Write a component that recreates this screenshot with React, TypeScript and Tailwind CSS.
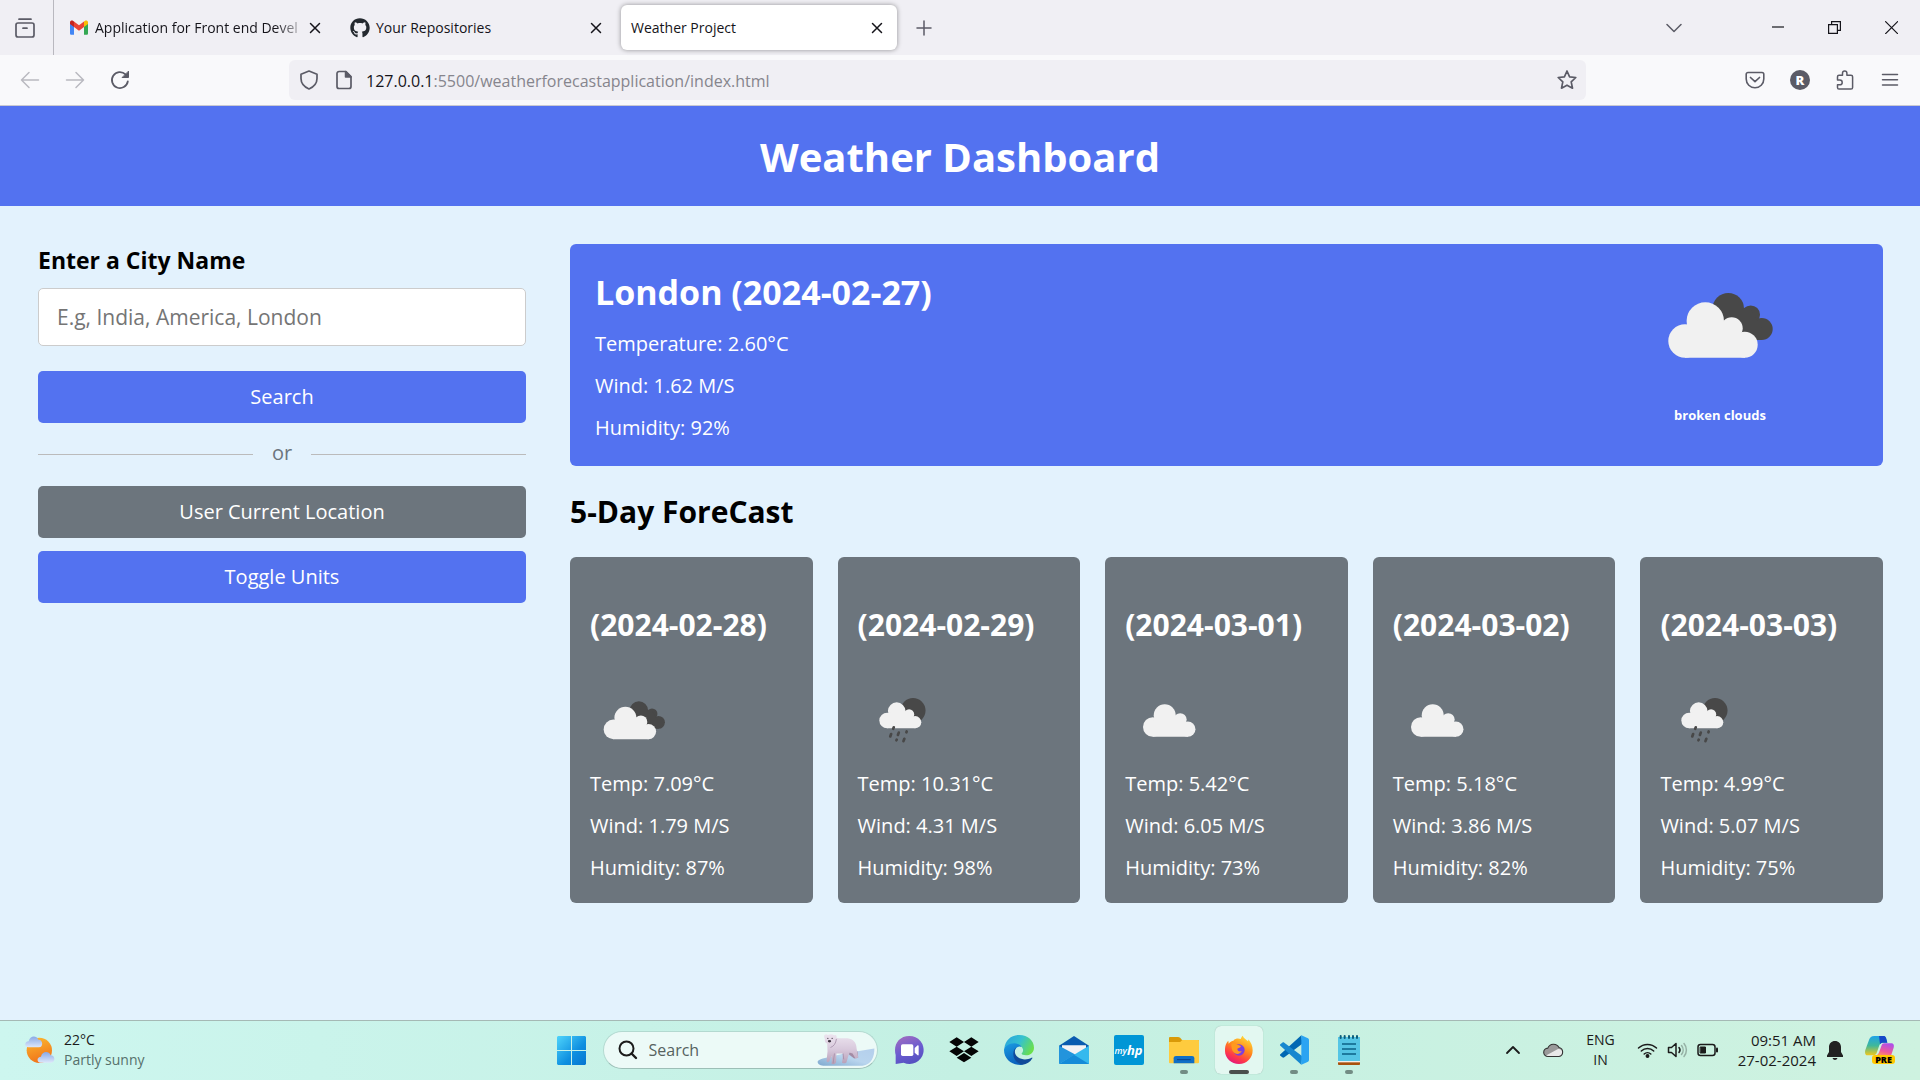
import type { ReactNode } from "react";
import { FaGithub } from "react-icons/fa";

type IconProps = { children: ReactNode; className?: string; box?: string };

/* Thin outlined icon used by the browser chrome */
function Line({ children, className = "size-5", box = "0 0 20 20" }: IconProps) {
  return (
    <svg viewBox={box} className={className} fill="none" stroke="currentColor" strokeWidth="1.5" strokeLinecap="round" strokeLinejoin="round" aria-hidden="true">
      {children}
    </svg>
  );
}

/* Filled, multi-colour icon */
function Art({ children, className = "size-[30px]", box = "0 0 90 90" }: IconProps) {
  return (
    <svg viewBox={box} className={className} aria-hidden="true">
      {children}
    </svg>
  );
}

function CloseMark() {
  return (
    <Line className="size-3" box="0 0 12 12">
      <path d="M1.5 1.5l9 9M10.5 1.5l-9 9" />
    </Line>
  );
}

type TabProps = { title: string; icon?: ReactNode; active?: boolean; fade?: boolean };

function Tab({ title, icon, active, fade }: TabProps) {
  return (
    <div
      className={
        active
          ? "flex h-[45px] w-[276px] items-center rounded-md bg-white pr-3.5 pl-2.5 shadow-[0_0_5px_rgba(0,0,0,0.4)]"
          : "flex h-[45px] w-[276px] items-center pr-3.5 pl-2.5"
      }
    >
      {icon && <span className="mr-1.5 shrink-0">{icon}</span>}
      <span
        className={
          fade
            ? "flex-1 [mask-image:linear-gradient(to_right,black_84%,transparent)] text-[14px] leading-5 whitespace-nowrap"
            : "flex-1 text-[14px] leading-5 whitespace-nowrap"
        }
      >
        {title}
      </span>
      <button type="button" aria-label={`Close ${title}`} className="shrink-0">
        <CloseMark />
      </button>
    </div>
  );
}

function TabBar() {
  return (
    <div className="flex h-[55px] items-center bg-[#f0eff4] text-[#15141a]">
      <button type="button" aria-label="Firefox View" className="flex h-full w-[54px] items-center justify-center border-r border-[#b9b8bf] text-[#5b5b66]">
        <Line className="-ml-1 size-5">
          <rect x="1" y="5" width="18" height="14" rx="2" strokeWidth="1.7" />
          <path d="M4 1.2h12M8 10.2h4" strokeWidth="1.7" />
        </Line>
      </button>
      <div className="ml-[5px] flex gap-[5px]">
        <Tab
          title="Application for Front end Devel"
          fade
          icon={
            <Art className="h-[15px] w-5" box="0 0 20 15">
              <path d="M1 2v11.5c0 .8.6 1.3 1.3 1.3H5V6z" fill="#4285f4" />
              <path d="M19 2v11.5c0 .8-.6 1.3-1.3 1.3H15V6z" fill="#34a853" />
              <path d="M15 1.6V7l4-3V2.4C19 .6 17 0 15.800.9z" fill="#fbbc04" />
              <path d="M5 7V1.500l5 3.8 5-3.800V7l-5 3.800z" fill="#ea4335" />
              <path d="M1 2.400V4l4 3V1.500L4.200.9C3 0 1 .6 1 2.400z" fill="#c5221f" />
            </Art>
          }
        />
        <Tab title="Your Repositories" icon={<FaGithub className="size-5 text-[#24292f]" aria-hidden="true" />} />
        <Tab title="Weather Project" active />
      </div>
      <button type="button" aria-label="New tab" className="ml-[19px] text-[#5b5b66]">
        <Line className="size-4" box="0 0 16 16">
          <path d="M8 1v14M1 8h14" />
        </Line>
      </button>
      <div className="ml-auto flex items-center pr-[22px]">
        <button type="button" aria-label="List all tabs" className="mr-[90px] text-[#5b5b66]">
          <Line className="size-4" box="0 0 16 16">
            <path d="M1 4.500l7 7 7-7" />
          </Line>
        </button>
        <div className="flex items-center gap-11">
          <button type="button" aria-label="Minimize">
            <Line className="h-[13px] w-3" box="0 0 12 13">
              <path d="M0 6h12" strokeWidth="1.200" strokeLinecap="butt" />
            </Line>
          </button>
          <button type="button" aria-label="Restore">
            <Line className="size-[13px]" box="0 0 13 13">
              <path d="M.600 3.600h8.800v8.800H.600zM3.600 3.600V.600h8.800v8.800h-3" strokeWidth="1.200" strokeLinejoin="miter" />
            </Line>
          </button>
          <button type="button" aria-label="Close window">
            <Line className="size-[13px]" box="0 0 13 13">
              <path d="M.600.600l12 12M12.600.600l-12 12" strokeWidth="1.200" />
            </Line>
          </button>
        </div>
      </div>
    </div>
  );
}

function AddressBar() {
  return (
    <div className="flex h-[51px] items-center border-b border-[#c9c9d2] bg-[#f9f9fb] pr-5 pl-5 text-[#5b5b66]">
      <div className="flex w-[269px] shrink-0 items-center gap-[25px]">
        <button type="button" aria-label="Back" className="text-[#b9b9c0]">
          <Line>
            <path d="M18.500 10H1.500M9 2.500L1.500 10 9 17.500" />
          </Line>
        </button>
        <button type="button" aria-label="Forward" className="text-[#b9b9c0]">
          <Line>
            <path d="M1.500 10h17M11 2.500l7.500 7.500-7.500 7.500" />
          </Line>
        </button>
        <button type="button" aria-label="Reload">
          <Line>
            <path d="M17.800 11.500A8 8 0 1 1 15.500 4.300" strokeWidth="1.800" />
            <path d="M18.500 1.500v6h-6z" fill="currentColor" strokeWidth="1" />
          </Line>
        </button>
      </div>
      <div className="flex h-10 flex-1 items-center rounded-md bg-[#f0eff4] pr-[9px] pl-[10px]">
        <Line>
          <path d="M10 1L18 4.200v4.300c0 5-3.500 8.500-8 10.500-4.500-2-8-5.500-8-10.500V4.200z" strokeWidth="1.700" />
        </Line>
        <Line className="ml-[15px] size-5">
          <path d="M12 1.500H5a2 2 0 0 0-2 2v13a2 2 0 0 0 2 2h10a2 2 0 0 0 2-2V6.500z" strokeWidth="1.700" />
          <path d="M11.500 1.500v5.500H17z" fill="currentColor" />
        </Line>
        <p className="ml-3 flex-1 pt-0.5 text-base leading-6 text-[#86858d]">
          <span className="text-[#15141a]">127.0.0.1</span>:5500/weatherforecastapplication/index.html
        </p>
        <button type="button" aria-label="Bookmark this page">
          <Line>
            <path d="M10 1l2.600 5.800 6.200.700-4.600 4.300 1.300 6.400L10 15.200l-5.500 3 1.300-6.400L1.200 7.500l6.200-.700z" strokeWidth="1.700" />
          </Line>
        </button>
      </div>
      <div className="flex w-[314px] shrink-0 items-center justify-end gap-[25px]">
        <button type="button" aria-label="Save to Pocket">
          <Line>
            <path d="M3 2.500h14a1.800 1.800 0 0 1 1.800 1.800V9a8.800 8.800 0 0 1-17.600 0V4.300A1.800 1.800 0 0 1 3 2.500z" strokeWidth="1.600" />
            <path d="M5.500 7.500l4.500 4.200 4.500-4.200" strokeWidth="1.700" />
          </Line>
        </button>
        <button type="button" aria-label="Account" className="flex size-5 items-center justify-center rounded-full bg-[#5b5b66] text-[13px] leading-none font-extrabold text-white">
          R
        </button>
        <button type="button" aria-label="Extensions">
          <Line>
            <path d="M2.500 10V6.800C2.500 5.800 3 5.200 4 5.200h3.500V3.300a2.200 2.200 0 0 1 4.400 0v1.900H16c1 0 1.600.600 1.600 1.600v10.600c0 1-.600 1.600-1.600 1.600H4c-1 0-1.500-.600-1.500-1.600v-2.600H4.800a2.400 2.400 0 0 0 0-4.800z" strokeWidth="1.500" />
          </Line>
        </button>
        <button type="button" aria-label="Menu">
          <Line>
            <path d="M2.500 4.500h15M2.500 9.800h15M2.500 15h15" />
          </Line>
        </button>
      </div>
    </div>
  );
}

/* ---------- Weather drawings, on a 150 unit canvas ---------- */

function WhiteCloud({ transform }: { transform?: string }) {
  return (
    <g fill="#f1f1f1" transform={transform}>
      <circle cx="40" cy="91" r="16.700" />
      <circle cx="60.300" cy="71" r="18.700" />
      <circle cx="86.700" cy="78.300" r="11" />
      <circle cx="99.700" cy="94.700" r="13" />
      <path d="M40 80L50 72h38l8 12 4 8v15.700H40z" />
    </g>
  );
}

type Sky = "broken" | "rain" | "cloud";

function WeatherIcon({ sky, large }: { sky: Sky; large?: boolean }) {
  return (
    <svg viewBox={large ? "0 19 150 112" : "0 0 150 150"} className={large ? "h-28 w-[150px]" : "size-[88px]"} role="img" aria-label={sky}>
      {sky === "broken" && (
        <g fill="#484848">
          <circle cx="83.300" cy="58.700" r="15.700" />
          <circle cx="105.700" cy="64.700" r="9.300" />
          <circle cx="116.700" cy="79" r="11" />
          <path d="M84 60h22l11 18v12H88z" />
        </g>
      )}
      {sky === "rain" && <circle cx="93.800" cy="59" r="21.300" fill="#484848" />}
      {sky === "broken" && <WhiteCloud />}
      {sky === "cloud" && <WhiteCloud transform="translate(7.400 -4)" />}
      {sky === "rain" && (
        <>
          <WhiteCloud transform="translate(17.700 3) scale(0.800)" />
          <g stroke="#484848" strokeWidth="4.600" strokeLinecap="round">
            <path d="M61 87.500l-1 2.500M56.500 99l-1.500 4M69.500 96.500l-1.500 4M83 94.500l-.500 1.500M66 108.500l-.500 1M79 107l-1.500 4" />
          </g>
        </>
      )}
    </svg>
  );
}

const forecast: { date: string; sky: Sky; temp: string; wind: string; humidity: string }[] = [
  { date: "2024-02-28", sky: "broken", temp: "7.09", wind: "1.79", humidity: "87" },
  { date: "2024-02-29", sky: "rain", temp: "10.31", wind: "4.31", humidity: "98" },
  { date: "2024-03-01", sky: "cloud", temp: "5.42", wind: "6.05", humidity: "73" },
  { date: "2024-03-02", sky: "cloud", temp: "5.18", wind: "3.86", humidity: "82" },
  { date: "2024-03-03", sky: "rain", temp: "4.99", wind: "5.07", humidity: "75" },
];

function SearchPanel() {
  return (
    <section className="flex flex-col">
      <label htmlFor="city" className="text-[23px] leading-8 font-bold text-black">
        Enter a City Name
      </label>
      <input
        id="city"
        type="text"
        placeholder="E.g, India, America, London"
        className="mt-3 h-[58px] w-full rounded-[5px] border border-[#ccc] bg-white px-[18px] text-[21px] placeholder:text-[#757575]"
      />
      <button type="button" className="mt-[25px] h-[52px] rounded-[5px] bg-[#5372f0] text-xl text-white">
        Search
      </button>
      <div className="my-[18px] flex h-[27px] items-center gap-[19px] text-xl text-[#6c757d]">
        <span className="h-px flex-1 bg-[#bbb]" />
        <span className="pb-1">or</span>
        <span className="h-px flex-1 bg-[#bbb]" />
      </div>
      <button type="button" className="h-[52px] rounded-[5px] bg-[#6c757d] text-xl text-white">
        User Current Location
      </button>
      <button type="button" className="mt-[13px] h-[52px] rounded-[5px] bg-[#5372f0] text-xl text-white">
        Toggle Units
      </button>
    </section>
  );
}

function Reading({ children }: { children: ReactNode }) {
  return <p className="text-xl leading-[27px] font-medium">{children}</p>;
}

function WeatherPage() {
  return (
    <div className="flex-1 bg-[#e3f2fd]">
      <h1 className="bg-[#5372f0] pt-6 pb-[22px] text-center text-[40px] leading-[54px] font-bold text-white">Weather Dashboard</h1>
      <main className="grid grid-cols-[488fr_1313fr] gap-11 py-[38px] pr-[37px] pl-[38px]">
        <SearchPanel />
        <section>
          <div className="flex justify-between rounded-md bg-[#5372f0] py-[25px] pr-[88px] pl-[25px] text-white">
            <div className="flex flex-col gap-[15px]">
              <h2 className="text-[34px] leading-[46px] font-bold">London (2024-02-27)</h2>
              <Reading>Temperature: 2.60°C</Reading>
              <Reading>Wind: 1.62 M/S</Reading>
              <Reading>Humidity: 92%</Reading>
            </div>
            <div className="text-center">
              <WeatherIcon sky="broken" large />
              <p className="mt-[25px] text-[13px] leading-[18px] font-bold">broken clouds</p>
            </div>
          </div>
          <h2 className="my-[25px] text-[30px] leading-[41px] font-bold text-black">5-Day ForeCast</h2>
          <ul className="grid grid-cols-5 gap-[25px]">
            {forecast.map((day) => (
              <li key={day.date} className="rounded-md bg-[#6c757d] px-5 pt-[47px] pb-[22px] text-white">
                <h3 className="text-[30px] leading-[41px] font-bold whitespace-nowrap">({day.date})</h3>
                <div className="mt-[31px] mb-1.5">
                  <WeatherIcon sky={day.sky} />
                </div>
                <div className="flex flex-col gap-[15px]">
                  <Reading>Temp: {day.temp}°C</Reading>
                  <Reading>Wind: {day.wind} M/S</Reading>
                  <Reading>Humidity: {day.humidity}%</Reading>
                </div>
              </li>
            ))}
          </ul>
        </section>
      </main>
    </div>
  );
}

/* ---------- Taskbar ---------- */

function PolarBear() {
  return (
    <Art className="h-8 w-[58px]" box="830 75 174 97">
      <defs>
        <linearGradient id="ice" x1="0" x2="1" y1="1" y2="0">
          <stop offset="0" stopColor="#7fa9cf" />
          <stop offset=".5" stopColor="#b9d5ee" />
          <stop offset="1" stopColor="#b4cfec" />
        </linearGradient>
        <linearGradient id="fur" x1="0" x2="0" y1="0" y2="1">
          <stop offset="0" stopColor="#ece4ef" />
          <stop offset=".5" stopColor="#d8c9dc" />
          <stop offset="1" stopColor="#b79fb6" />
        </linearGradient>
      </defs>
      <path d="M831 158c2-8 40-14 80-24l92-15c0 24-8 50-36 52H848c-12-2-18-6-17-13z" fill="url(#ice)" />
      <path d="M930 118l22 10 2 18-12 3-16-12z" fill="#a38ba4" />
      <path d="M852 78c4-4 8-1 10 0 7-3 14-3 19 1 6-3 9 1 7 7 12 4 22 1 34 2 17 2 27 14 27 30l5 28-8 4-9-16-10-3-8 28c-1 5-9 6-14 3l1-8 2-20-20 0-1 26c-1 6-9 8-14 5l1-8-1-16-6 16c-3 5-9 4-9-1l3-28-1-24c-6-2-8-8-7-14-2-4-4-9-1-12z" fill="url(#fur)" />
      <path d="M888 90c-2 14-8 22-18 26M882 134l-4 30M908 134l2 18" stroke="#a48da8" strokeWidth="2.500" fill="none" />
      <circle cx="862" cy="88" r="2" fill="#443746" />
      <circle cx="875" cy="88" r="2" fill="#443746" />
      <ellipse cx="867" cy="97" rx="5" ry="3.500" fill="#3d3340" />
    </Art>
  );
}

const apps: { name: string; mark?: "running" | "active"; art: ReactNode }[] = [
  {
    name: "Chat",
    art: (
      <Art>
        <defs>
          <linearGradient id="chat" x1=".2" x2=".6" y1="0" y2="1">
            <stop offset="0" stopColor="#a06cc0" />
            <stop offset=".55" stopColor="#6a5bd0" />
            <stop offset="1" stopColor="#5550c0" />
          </linearGradient>
        </defs>
        <path d="M46 3a42 42 0 1 1-17 80L5 87V60C-3 30 14 3 46 3z" fill="url(#chat)" />
        <rect x="21" y="28" width="37" height="35" rx="5" fill="#fff" />
        <path d="M62 39l9-8c1-1 3 0 3 2v26c0 2-2 3-3 2l-9-8z" fill="#fff" />
      </Art>
    ),
  },
  {
    name: "Dropbox",
    art: (
      <Art>
        <path d="M23 7L1 21l22 14 22-14zM67 7L45 21l22 14 22-14zM23 35L1 49l22 14 22-14zM67 35L45 49l22 14 22-14zM45 54L23 68l22 14 22-14z" fill="#050505" />
      </Art>
    ),
  },
  {
    name: "Edge",
    art: (
      <Art>
        <defs>
          <linearGradient id="edgeTop" x1="0" x2="1" y1=".2" y2=".6">
            <stop offset="0" stopColor="#2aa5dc" />
            <stop offset=".5" stopColor="#35c1d0" />
            <stop offset="1" stopColor="#6be04a" />
          </linearGradient>
          <linearGradient id="edgeLeft" x1="0" x2=".4" y1="0" y2="1">
            <stop offset="0" stopColor="#1b9de2" />
            <stop offset="1" stopColor="#0b62bd" />
          </linearGradient>
        </defs>
        <path d="M1 40C4 15 22 0 46 0c26 0 44 18 44 38 0 15-12 23-24 23-9 0-14-3-13-6 3-4 5-7 4-12-2-9-12-15-24-15C18 28 5 34 1 40z" fill="url(#edgeTop)" />
        <path d="M0 45c1-11 15-20 31-20 10 0 19 5 22 11-10-6-22 4-22 20 0 18 14 31 27 33C30 94 0 76 0 45z" fill="url(#edgeLeft)" />
        <path d="M38 37c-8 7-8 21 4 30 12 8 28 8 41 1 2-1 3 1 2 2-7 12-17 18-29 19-16-2-29-17-28-33 0-9 4-16 10-19z" fill="#114a9a" />
      </Art>
    ),
  },
  {
    name: "Mail",
    art: (
      <Art>
        <path d="M0 32L45 3l45 29v10H0z" fill="#0a5bb0" />
        <path d="M9 31h72v14L45 62 9 45z" fill="#f5f2f5" />
        <path d="M0 32l50 27-50 28z" fill="#2394dc" />
        <path d="M90 32L45 59 0 87h90z" fill="#35b9ee" />
        <path d="M0 87l45-28 45 28z" fill="#168bd8" />
      </Art>
    ),
  },
  {
    name: "myHP",
    art: (
      <span className="flex size-[30px] items-center justify-center rounded-xs bg-[#0096d6] text-white italic">
        <span className="text-[9px] leading-none font-semibold">my</span>
        <span className="text-[13px] leading-none font-bold">hp</span>
      </span>
    ),
  },
  {
    name: "File Explorer",
    mark: "running",
    art: (
      <Art>
        <path d="M0 9c0-2 1-3 3-3h24c5 0 8 4 12 9h48c2 0 3 1 3 3v20H0z" fill="#d99a08" />
        <path d="M0 21h32c4 0 6-6 9-6h46c2 0 3 1 3 3v64c0 2-1 3-3 3H3c-2 0-3-1-3-3z" fill="#fecb3e" />
        <path d="M14 85V70c0-5 3-7 7-7h48c4 0 7 2 7 7v15z" fill="#0f6fc6" />
        <path d="M24 74h41" stroke="#08408a" strokeWidth="3" />
      </Art>
    ),
  },
  {
    name: "Firefox",
    mark: "active",
    art: (
      <Art>
        <defs>
          <linearGradient id="fox" x1=".8" x2=".3" y1="0" y2="1">
            <stop offset="0" stopColor="#ffe23a" />
            <stop offset=".45" stopColor="#ff8a1c" />
            <stop offset=".75" stopColor="#ff3b47" />
            <stop offset="1" stopColor="#e3157f" />
          </linearGradient>
        </defs>
        <path d="M4 34c2-8 5-13 9-17l1 9c4-6 9-8 14-9 7-8 16-7 22-5 2-5 4-8 6-10 3 8 10 11 16 17 1-2 1-4 1-6 8 9 13 20 13 33 0 24-18 41-41 41S3 70 3 48c0-5 0-10 1-14z" fill="url(#fox)" />
        <circle cx="45" cy="45" r="17" fill="#7b3fe0" />
        <path d="M22 26c8-3 14 0 18 4 5 0 10 2 11 4-2 5-8 5-11 7 0 7 6 10 13 7-3 9-16 12-24 4-6-6-7-17-7-26z" fill="#ff9a1f" />
      </Art>
    ),
  },
  {
    name: "Visual Studio Code",
    mark: "running",
    art: (
      <Art>
        <path d="M67 1L5 57c-3 2-3 4 0 6l5 4c2 2 4 1 6 0L70 26z" fill="#0068b3" />
        <path d="M67 89L5 33c-3-2-3-4 0-6l5-4c2-2 4-1 6 0l54 41z" fill="#1787cf" />
        <path d="M67 1l20 9c2 1 3 3 3 5v60c0 2-1 4-3 5l-20 9z" fill="#2ba4f2" />
      </Art>
    ),
  },
  {
    name: "Notepad",
    mark: "running",
    art: (
      <Art>
        <path d="M12 76h66v10c0 2-1 4-3 4H15c-2 0-3-2-3-4z" fill="#a8520e" />
        <path d="M12 76h66v6H12z" fill="#f4efe9" />
        <path d="M12 6h66v72H12z" fill="#55c5e5" />
        <path d="M20 3v6M32 3v6M45 3v6M57 3v6M69 3v6" stroke="#0b5d7c" strokeWidth="6" strokeLinecap="round" />
        <path d="M24 27h42M24 42h42M24 57h42" stroke="#0b6286" strokeWidth="5" />
      </Art>
    ),
  },
];

function Taskbar() {
  return (
    <footer className="grid h-[60px] grid-cols-[1fr_auto_1fr] border-t border-[#a5b9b5] bg-linear-to-r from-[#cdf6ef] via-[#c4f0e3] via-50% to-[#cef2e0] pb-px text-[#1b1b1b]">
      <button type="button" className="flex items-center gap-2 justify-self-start pl-6 text-left">
        <Art className="h-7 w-8" box="0 0 96 84">
          <defs>
            <linearGradient id="sun" x1=".3" x2=".6" y1="0" y2="1">
              <stop offset="0" stopColor="#fbb62f" />
              <stop offset="1" stopColor="#f07018" />
            </linearGradient>
            <linearGradient id="puff" x1="0" x2="0" y1="0" y2="1">
              <stop offset="0" stopColor="#89a9e6" />
              <stop offset="1" stopColor="#dde7fa" />
            </linearGradient>
          </defs>
          <circle cx="46" cy="43" r="38" fill="url(#sun)" />
          <path d="M13 34C0 33 1 16 14 16 17-2 38-3 43 11c14-1 16 22 2 23z" fill="url(#puff)" />
          <path d="M50 80c-13-1-12-18 1-18 3-17 24-18 29-4 14 0 15 21 2 22z" fill="url(#puff)" />
        </Art>
        <span className="text-[14px] leading-5">
          22°C
          <span className="block text-[#56706b]">Partly sunny</span>
        </span>
      </button>

      <nav className="flex items-center gap-[7px]" aria-label="Taskbar">
        <button type="button" aria-label="Start" className="flex size-12 items-center justify-center">
          <Art className="size-[29px]" box="0 0 29 29">
            <defs>
              <linearGradient id="win" x1="0" x2="1" y1="0" y2="1">
                <stop offset="0" stopColor="#4fd4fb" />
                <stop offset=".6" stopColor="#0e8fe0" />
                <stop offset="1" stopColor="#0675d0" />
              </linearGradient>
            </defs>
            <path d="M1 0h13v14H0V1zM15 0h13l1 1v13H15zM0 15h14v14H1l-1-1zM15 15h14v13l-1 1H15z" fill="url(#win)" />
          </Art>
        </button>
        <label className="flex h-[38px] w-[275px] items-center rounded-full border border-[#b3d9d0] border-b-[#9dbfb7] bg-[#ecfaf7] pr-0.5 pl-3.5">
          <Line className="size-5 shrink-0">
            <circle cx="8.500" cy="8.500" r="7" strokeWidth="2" />
            <path d="M13.500 13.500l4.500 4.500" strokeWidth="2.400" />
          </Line>
          <input type="text" placeholder="Search" aria-label="Search" className="ml-[11px] w-0 flex-1 bg-transparent text-base placeholder:text-[#56625f]" />
          <PolarBear />
        </label>
        {apps.map((app) => (
          <button
            key={app.name}
            type="button"
            aria-label={app.name}
            className={
              app.mark === "active"
                ? "relative flex size-12 items-center justify-center rounded-md bg-[#e3f8f1] shadow-[0_0_1px_rgba(0,0,0,0.3)]"
                : "relative flex size-12 items-center justify-center"
            }
          >
            {app.art}
            {app.mark === "running" && <span className="absolute bottom-0 h-1 w-2 rounded-full bg-[#728c84]" />}
            {app.mark === "active" && <span className="absolute bottom-0 h-1 w-5 rounded-full bg-[#4a4f4d]" />}
          </button>
        ))}
      </nav>

      <div className="flex items-center justify-self-end pr-[25px]">
        <button type="button" aria-label="Show hidden icons">
          <Line className="size-4" box="0 0 16 16">
            <path d="M2 11l6-6 6 6" strokeWidth="1.800" />
          </Line>
        </button>
        <Art className="ml-[22px] h-4 w-[21px]" box="0 0 21 16">
          <path d="M5 14.500a4.200 4.200 0 0 1-.200-8.400A6.200 6.200 0 0 1 16 5.500a4.600 4.600 0 0 1 0 9z" fill="#9a9a9a" />
          <path d="M3 13.500l12-6.500c3 0 5 2 4.500 4.500-.300 2-2 3-3.500 3H5z" fill="#e9e9e9" />
          <path d="M5 14.500a4.200 4.200 0 0 1-.200-8.400A6.200 6.200 0 0 1 16 5.500a4.600 4.600 0 0 1 0 9z" fill="none" stroke="#333" strokeWidth="1.100" />
        </Art>
        <button type="button" className="ml-[22px] text-center text-[14px] leading-5">
          ENG
          <br />
          IN
        </button>
        <button type="button" aria-label="Network, volume and battery" className="ml-[22px] flex items-center gap-[9px]">
          <Line className="h-4 w-[21px]" box="0 0 21 16">
            <path d="M1.500 6a13 13 0 0 1 18 0M4.300 9a9 9 0 0 1 12.400 0M7.200 12a4.800 4.800 0 0 1 6.600 0" />
            <circle cx="10.500" cy="14" r="1.200" fill="currentColor" />
          </Line>
          <Line className="h-4 w-[21px]" box="0 0 21 16">
            <path d="M1.500 5.500h3L9 1.500v13l-4.500-4H1.500z" />
            <path d="M12 5.500a4 4 0 0 1 0 5" />
            <path d="M14.500 3.500a7 7 0 0 1 0 9M17 1.500a10 10 0 0 1 0 13" opacity=".3" />
          </Line>
          <Line className="h-4 w-[21px]" box="0 0 21 16">
            <rect x="1" y="2.500" width="17" height="11" rx="2.500" />
            <rect x="3.500" y="5" width="5" height="6" fill="currentColor" strokeWidth="1" />
            <path d="M20 6.500v3" strokeWidth="2" />
          </Line>
        </button>
        <button type="button" className="ml-5 text-right text-[15px] leading-5">
          09:51 AM
          <br />
          27-02-2024
        </button>
        <button type="button" aria-label="Notifications" className="ml-[11px]">
          <Art className="h-[19px] w-4" box="0 0 16 19">
            <path d="M8 0c3.500 0 6 2.600 6 6v5l2 3.500V16H0v-1.500L2 11V6c0-3.400 2.500-6 6-6zM5.500 17h5c-.500 1.200-1.300 2-2.500 2s-2-.800-2.500-2z" fill="#222" />
          </Art>
        </button>
        <button type="button" aria-label="Copilot preview" className="relative ml-[22px] h-7 w-[30px]">
          <Art className="h-7 w-[30px]" box="0 0 90 84">
            <defs>
              <linearGradient id="pilotA" x1="0" x2="0" y1="0" y2="1">
                <stop offset="0" stopColor="#1fa3e8" />
                <stop offset=".5" stopColor="#3fb89a" />
                <stop offset="1" stopColor="#f2c81c" />
              </linearGradient>
              <linearGradient id="pilotB" x1=".6" x2=".2" y1="0" y2="1">
                <stop offset="0" stopColor="#b04fe8" />
                <stop offset=".6" stopColor="#ee5a9a" />
                <stop offset="1" stopColor="#ff9a5a" />
              </linearGradient>
            </defs>
            <path d="M28 0h26c8 0 10 8 13 20H54c-8 0-11 6-13 14l-5 14c-2 8-7 10-14 10H8C0 58-1 50 1 42L12 12C15 4 19 0 28 0z" fill="url(#pilotA)" />
            <path d="M42 0h14c7 0 8 8 11 20H54c-4 0-7 2-9 5z" fill="#1549c8" />
            <path d="M58 22h20c8 0 10 6 8 13l-8 24H30c8-2 11-6 14-15l5-14c2-6 4-8 9-8z" fill="url(#pilotB)" />
          </Art>
          <span className="absolute right-0 bottom-0 w-[23px] rounded-[3px] bg-[#ffc800] text-center text-[9px] leading-[9px] font-extrabold text-black">PRE</span>
        </button>
      </div>
    </footer>
  );
}

export default function App() {
  return (
    <div className="flex min-h-screen flex-col font-['Open_Sans','Noto_Sans',sans-serif]">
      <header>
        <TabBar />
        <AddressBar />
      </header>
      <WeatherPage />
      <Taskbar />
    </div>
  );
}
